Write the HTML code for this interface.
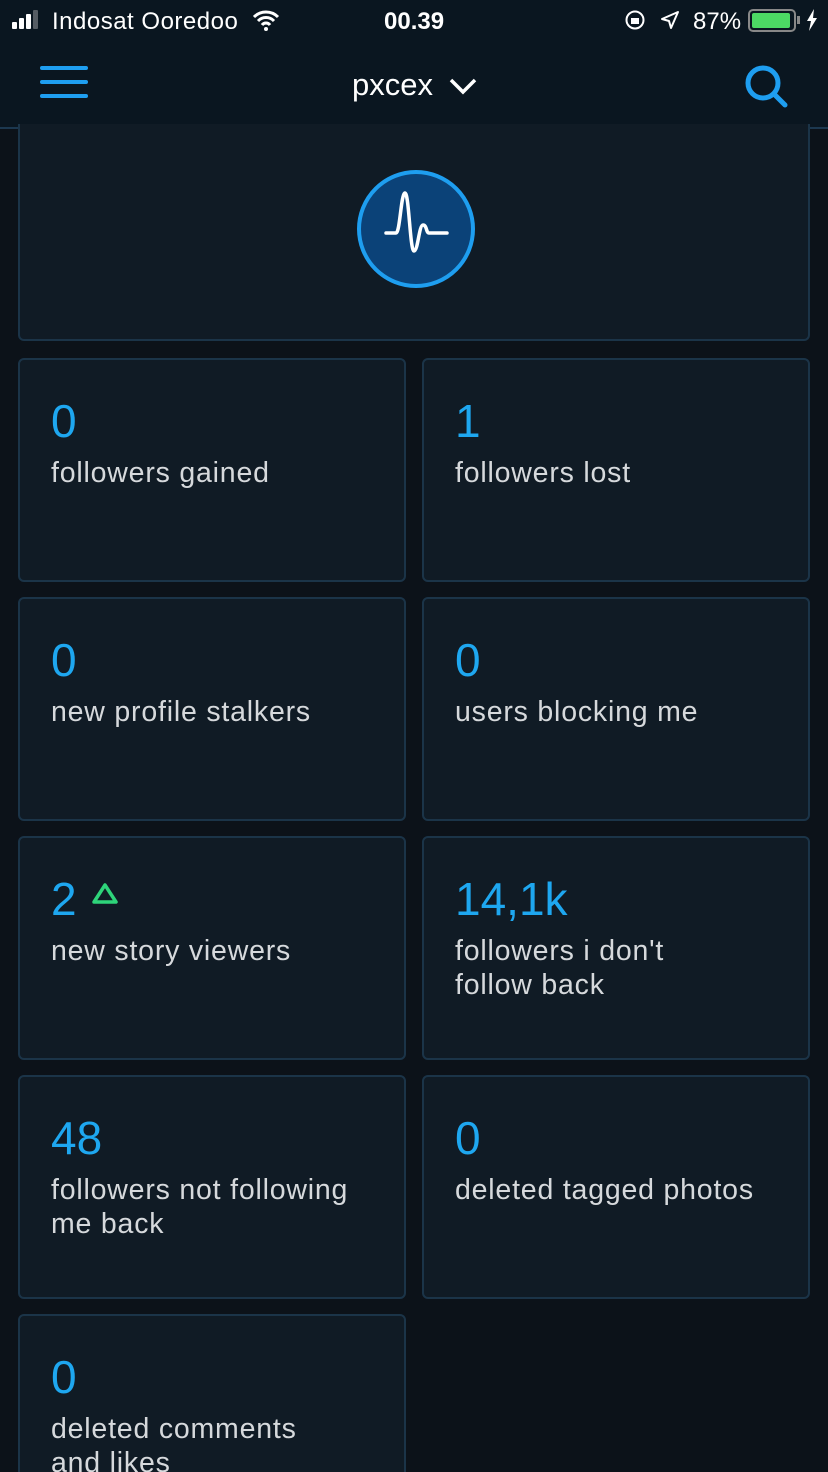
<!DOCTYPE html>
<html><head><meta charset="utf-8"><style>
*{margin:0;padding:0;box-sizing:border-box}
html,body{width:828px;height:1472px;overflow:hidden}
body{background:#0c1219;font-family:"Liberation Sans",sans-serif;position:relative}
.status{position:absolute;top:0;left:0;width:828px;height:44px;background:#0a1620;color:#fff;font-size:24px}
.nav{position:absolute;top:44px;left:0;width:828px;height:85px;background:#0a1620;border-bottom:2px solid #1c3850}
.card{position:absolute;background:#101b25;border:2px solid #1b3448;border-radius:6px}
.num{position:absolute;left:31px;top:38px;color:#1ea7f0;font-size:46px;line-height:1}
.lbl{position:absolute;left:31px;top:96px;color:#d6d9dc;font-size:28.5px;line-height:34px;letter-spacing:0.8px}
</style></head><body>
<div class="status">
 <div style="position:absolute;left:12px;top:22px;width:5px;height:7px;background:#fff;border-radius:1px"></div>
 <div style="position:absolute;left:19px;top:18px;width:5px;height:11px;background:#fff;border-radius:1px"></div>
 <div style="position:absolute;left:26px;top:14px;width:5px;height:15px;background:#fff;border-radius:1px"></div>
 <div style="position:absolute;left:33px;top:10px;width:5px;height:19px;background:#555c63;border-radius:1px"></div>
 <div style="position:absolute;left:52px;top:8px;letter-spacing:0.5px">Indosat Ooredoo</div>
 <svg style="position:absolute;left:252px;top:9px" width="28" height="22" viewBox="0 0 28 22"><path d="M2 8a17 17 0 0 1 24 0M6 12a11 11 0 0 1 16 0M10 16a5 5 0 0 1 8 0" stroke="#fff" stroke-width="3" fill="none"/><circle cx="14" cy="20" r="2" fill="#fff"/></svg>
 <div style="position:absolute;left:384px;top:8px;font-weight:bold">00.39</div>
 <svg style="position:absolute;left:624px;top:9px" width="22" height="22" viewBox="0 0 22 22"><circle cx="11" cy="11" r="8.5" stroke="#fff" stroke-width="2" fill="none"/><rect x="7" y="9" width="8" height="6" fill="#fff"/></svg>
 <svg style="position:absolute;left:660px;top:10px" width="20" height="20" viewBox="0 0 20 20"><path d="M18 2L2 9l7 2 2 7z" stroke="#fff" stroke-width="2" fill="none" stroke-linejoin="round"/></svg>
 <div style="position:absolute;left:693px;top:8px">87%</div>
 <div style="position:absolute;left:748px;top:9px;width:48px;height:23px;border:2px solid #888;border-radius:5px"><div style="position:absolute;left:2px;top:2px;width:38px;height:15px;background:#4cd964;border-radius:2px"></div></div>
 <div style="position:absolute;left:797px;top:16px;width:3px;height:8px;background:#888"></div>
 <svg style="position:absolute;left:806px;top:9px" width="12" height="22" viewBox="0 0 12 22"><path d="M8 0L1 12h4l-2 10 8-13H7z" fill="#fff"/></svg>
</div>
<div class="nav">
 <div style="position:absolute;left:40px;top:22px;width:48px;height:4px;background:#1e9ef0;border-radius:2px"></div>
 <div style="position:absolute;left:40px;top:36px;width:48px;height:4px;background:#1e9ef0;border-radius:2px"></div>
 <div style="position:absolute;left:40px;top:50px;width:48px;height:4px;background:#1e9ef0;border-radius:2px"></div>
 <div style="position:absolute;left:352px;top:23px;color:#fff;font-size:31px">pxcex</div>
 <svg style="position:absolute;left:448px;top:32px" width="30" height="20" viewBox="0 0 30 20"><path d="M3 4l12 12L27 4" stroke="#fff" stroke-width="3.5" fill="none"/></svg>
 <svg style="position:absolute;left:742px;top:18px" width="48" height="48" viewBox="0 0 48 48"><circle cx="21" cy="21" r="15" stroke="#1e9ef0" stroke-width="5" fill="none"/><path d="M32 32l11 11" stroke="#1e9ef0" stroke-width="5" stroke-linecap="round"/></svg>
</div>
<div class="card" style="left:18px;top:124px;width:792px;height:217px;border-top:none;border-radius:0 0 6px 6px">
 <svg style="position:absolute;left:336px;top:45px" width="120" height="120" viewBox="0 0 120 120"><circle cx="60" cy="60" r="57" fill="#0b4278" stroke="#1e9ef0" stroke-width="4"/><path d="M30 64h10c4 0 5-40 9-40s5 58 9 58 5-26 9-26 3 8 6 8h18" stroke="#fff" stroke-width="3.5" fill="none" stroke-linecap="round" stroke-linejoin="round"/></svg>
</div>
<div class="card" style="left:18px;top:358px;width:388px;height:224px"><div class="num">0</div><div class="lbl">followers gained</div></div>
<div class="card" style="left:422px;top:358px;width:388px;height:224px"><div class="num">1</div><div class="lbl">followers lost</div></div>
<div class="card" style="left:18px;top:597px;width:388px;height:224px"><div class="num">0</div><div class="lbl">new profile stalkers</div></div>
<div class="card" style="left:422px;top:597px;width:388px;height:224px"><div class="num">0</div><div class="lbl">users blocking me</div></div>
<div class="card" style="left:18px;top:836px;width:388px;height:224px"><div class="num">2</div>
 <svg style="position:absolute;left:71px;top:44px" width="28" height="24" viewBox="0 0 28 24"><path d="M14 3L25 20H3z" stroke="#2ed47a" stroke-width="3.5" fill="none" stroke-linejoin="round"/></svg>
 <div class="lbl">new story viewers</div></div>
<div class="card" style="left:422px;top:836px;width:388px;height:224px"><div class="num">14,1k</div><div class="lbl">followers i don't<br>follow back</div></div>
<div class="card" style="left:18px;top:1075px;width:388px;height:224px"><div class="num">48</div><div class="lbl">followers not following<br>me back</div></div>
<div class="card" style="left:422px;top:1075px;width:388px;height:224px"><div class="num">0</div><div class="lbl">deleted tagged photos</div></div>
<div class="card" style="left:18px;top:1314px;width:388px;height:224px"><div class="num">0</div><div class="lbl">deleted comments<br>and likes</div></div>
</body></html>
